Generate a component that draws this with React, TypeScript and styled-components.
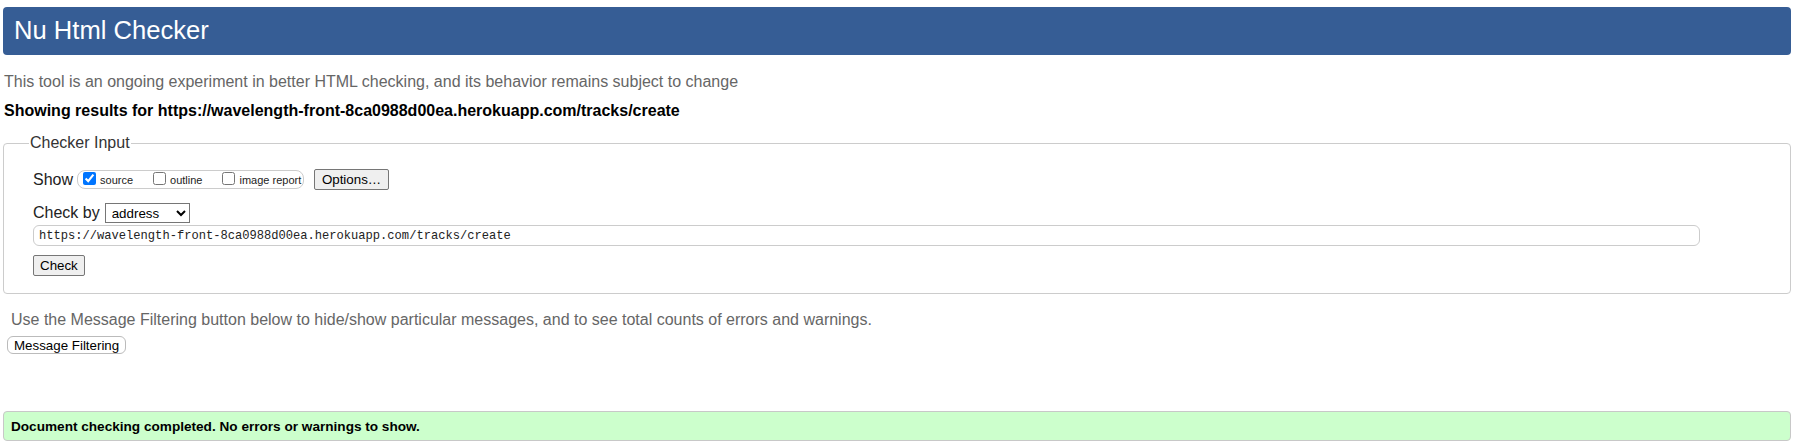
import React from "react";
import styled, { createGlobalStyle } from "styled-components";

const GlobalStyle = createGlobalStyle`
  html, body {
    margin: 0;
    padding: 0;
    background: #fff;
  }
  body {
    font-family: "Liberation Sans", Arial, sans-serif;
    color: #222;
  }
`;

const Page = styled.div`
  padding: 7px 4px 0 3px;
  display: flex;
  flex-direction: column;
`;

const Header = styled.h1`
  margin: 0;
  height: 48px;
  line-height: 46px;
  padding-left: 11px;
  background: #365d95;
  color: #fff;
  border-radius: 4px;
  font-size: 25.6px;
  font-weight: normal;
`;

const Intro = styled.p`
  margin: 18px 0 0 1px;
  font-size: 16px;
  line-height: 18px;
  color: #666;
`;

const Showing = styled.p`
  margin: 11px 0 0 1px;
  font-size: 16px;
  line-height: 18px;
  font-weight: bold;
  color: #000;
`;

const Fieldset = styled.fieldset`
  margin: 14px 0 0 0;
  padding: 17px 29px 17px 29px;
  border: 1px solid #ccc;
  border-radius: 4px;
  display: flex;
  flex-direction: column;
  align-items: flex-start;
`;

const Legend = styled.legend`
  margin-left: -4px;
  padding: 0 1px;
  font-size: 16px;
  line-height: 18px;
  color: #333;
`;

const Row = styled.div<{ $gap?: number }>`
  display: flex;
  align-items: center;
  margin-bottom: ${(p) => p.$gap ?? 0}px;
`;

const RowLabel = styled.span`
  font-size: 16px;
  color: #222;
  margin-right: 5px;
`;

const ToggleGroup = styled.div`
  display: flex;
  align-items: center;
  height: 19px;
  width: 227px;
  box-sizing: border-box;
  padding: 0 0 0 5px;
  border: 1px solid #ccc;
  border-radius: 8px;
  margin-left: -1px;
`;

const Toggle = styled.label`
  display: flex;
  align-items: center;
  font-size: 11px;
  color: #222;
  margin-right: 20px;
  &:last-child {
    margin-right: 0;
  }
  input {
    width: 13px;
    height: 13px;
    margin: 0 4px 2px 0;
  }
`;

const Button = styled.button<{ $round?: boolean }>`
  font-family: "Liberation Sans", Arial, sans-serif;
  font-size: 13.33px;
  color: #000;
  padding: 1px 6px;
  height: ${(p) => (p.$round ? 18 : 21)}px;
  line-height: 15px;
  background: ${(p) => (p.$round ? "#fff" : "#efefef")};
  border: 1px solid ${(p) => (p.$round ? "#bbb" : "#767676")};
  border-radius: ${(p) => (p.$round ? 6 : 2)}px;
`;

const OptionsButton = styled(Button)`
  margin-left: 10px;
  width: 75px;
`;

const Select = styled.select`
  font-family: "Liberation Sans", Arial, sans-serif;
  font-size: 13.33px;
  width: 85px;
  height: 20px;
  color: #000;
  border: 1px solid #767676;
  border-radius: 0;
  background: #fff;
  padding: 0 2px;
`;

const UrlInput = styled.input`
  width: 1667px;
  height: 21px;
  box-sizing: border-box;
  margin-left: 0;
  padding: 0 5px;
  border: 1px solid #ccc;
  border-radius: 6px;
  font-family: "Liberation Mono", "DejaVu Sans Mono", monospace;
  font-size: 12.1px;
  color: #222;
`;

const FilterHint = styled.p`
  margin: 17px 0 0 8px;
  font-size: 16px;
  line-height: 18px;
  color: #666;
`;

const FilterRow = styled.div`
  margin: 7px 0 0 4px;
`;

const Result = styled.div`
  margin-top: 57px;
  height: 30px;
  box-sizing: border-box;
  padding: 0 7px;
  display: flex;
  align-items: center;
  background: #ccffcc;
  border: 1px solid #c8c8c8;
  border-radius: 4px;
  font-size: 13.6px;
  font-weight: bold;
  color: #000;
`;

export default function App() {
  return (
    <>
      <GlobalStyle />
      <Page>
        <Header>Nu Html Checker</Header>
        <Intro>
          This tool is an ongoing experiment in better HTML checking, and its behavior remains subject to change
        </Intro>
        <Showing>
          Showing results for https://wavelength-front-8ca0988d00ea.herokuapp.com/tracks/create
        </Showing>
        <Fieldset>
          <Legend>Checker Input</Legend>
          <Row $gap={13}>
            <RowLabel>Show</RowLabel>
            <ToggleGroup>
              <Toggle>
                <input type="checkbox" defaultChecked />
                source
              </Toggle>
              <Toggle>
                <input type="checkbox" />
                outline
              </Toggle>
              <Toggle>
                <input type="checkbox" />
                image report
              </Toggle>
            </ToggleGroup>
            <OptionsButton>Options…</OptionsButton>
          </Row>
          <Row $gap={2}>
            <RowLabel>Check by</RowLabel>
            <Select defaultValue="address">
              <option value="address">address</option>
              <option value="file">file upload</option>
              <option value="text">text input</option>
            </Select>
          </Row>
          <Row $gap={9}>
            <UrlInput
              readOnly
              value="https://wavelength-front-8ca0988d00ea.herokuapp.com/tracks/create"
            />
          </Row>
          <Button>Check</Button>
        </Fieldset>
        <FilterHint>
          Use the Message Filtering button below to hide/show particular messages, and to see total counts of errors and warnings.
        </FilterHint>
        <FilterRow>
          <Button $round>Message Filtering</Button>
        </FilterRow>
        <Result>Document checking completed. No errors or warnings to show.</Result>
      </Page>
    </>
  );
}
